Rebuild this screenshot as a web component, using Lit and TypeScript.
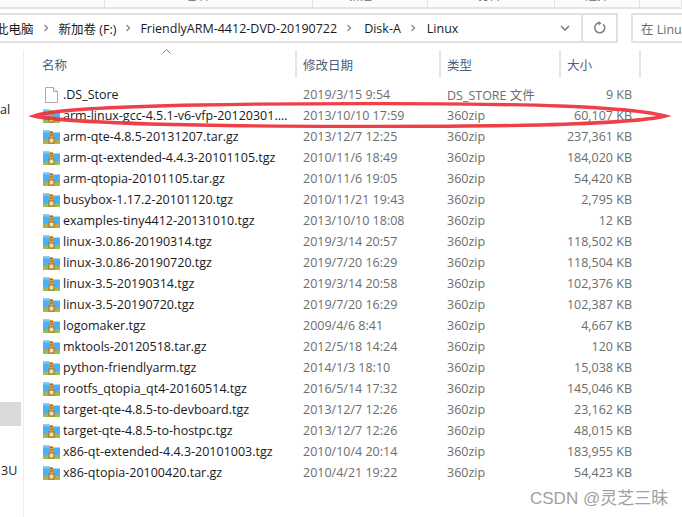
import { LitElement, html, css, svg } from "lit";
import { customElement } from "lit/decorators.js";

const files: [string, string, string, string][] = [
  [".DS_Store", "2019/3/15 9:54", "DS_STORE 文件", "9 KB"],
  ["arm-linux-gcc-4.5.1-v6-vfp-20120301....", "2013/10/10 17:59", "360zip", "60,107 KB"],
  ["arm-qte-4.8.5-20131207.tar.gz", "2013/12/7 12:25", "360zip", "237,361 KB"],
  ["arm-qt-extended-4.4.3-20101105.tgz", "2010/11/6 18:49", "360zip", "184,020 KB"],
  ["arm-qtopia-20101105.tar.gz", "2010/11/6 19:05", "360zip", "54,420 KB"],
  ["busybox-1.17.2-20101120.tgz", "2010/11/21 19:43", "360zip", "2,795 KB"],
  ["examples-tiny4412-20131010.tgz", "2013/10/10 18:08", "360zip", "12 KB"],
  ["linux-3.0.86-20190314.tgz", "2019/3/14 20:57", "360zip", "118,502 KB"],
  ["linux-3.0.86-20190720.tgz", "2019/7/20 16:29", "360zip", "118,504 KB"],
  ["linux-3.5-20190314.tgz", "2019/3/14 20:58", "360zip", "102,376 KB"],
  ["linux-3.5-20190720.tgz", "2019/7/20 16:29", "360zip", "102,387 KB"],
  ["logomaker.tgz", "2009/4/6 8:41", "360zip", "4,667 KB"],
  ["mktools-20120518.tar.gz", "2012/5/18 14:24", "360zip", "120 KB"],
  ["python-friendlyarm.tgz", "2014/1/3 18:10", "360zip", "15,038 KB"],
  ["rootfs_qtopia_qt4-20160514.tgz", "2016/5/14 17:32", "360zip", "145,046 KB"],
  ["target-qte-4.8.5-to-devboard.tgz", "2013/12/7 12:26", "360zip", "23,162 KB"],
  ["target-qte-4.8.5-to-hostpc.tgz", "2013/12/7 12:26", "360zip", "48,015 KB"],
  ["x86-qt-extended-4.4.3-20101003.tgz", "2010/10/4 20:14", "360zip", "183,955 KB"],
  ["x86-qtopia-20100420.tar.gz", "2010/4/21 19:22", "360zip", "54,423 KB"],
];

const zipIcon = svg`<svg class="icon" viewBox="0 0 17 16" width="17" height="16">
  <path d="M0 1.5h6.5l1.5 2H17v10H0z" fill="#4ab2f4"/>
  <path d="M0 1.5h6.5l1.5 2H0z" fill="#7cc8f7"/>
  <rect x="0" y="11.2" width="17" height="1.4" fill="#ef9a22"/>
  <rect x="0" y="12.6" width="17" height="2.4" fill="#8fc44f"/>
  <rect x="7" y="2" width="3" height="8" fill="#e6a23a"/>
  <rect x="7" y="3" width="3" height="1" fill="#9a6a25"/>
  <rect x="7" y="5.5" width="3" height="1" fill="#9a6a25"/>
  <rect x="6" y="9" width="5" height="5" fill="#f6dfa8" stroke="#a86a1c" stroke-width="1"/>
</svg>`;

const fileIcon = svg`<svg class="icon" viewBox="0 0 17 18" width="17" height="18">
  <path d="M2.5 1.5h8l4 4v11h-12z" fill="#fff" stroke="#a9a9a9"/>
  <path d="M10.5 1.5v4h4" fill="#f2f2f2" stroke="#a9a9a9"/>
</svg>`;

const chevron = svg`<svg class="chev" viewBox="0 0 6 8" width="6" height="8"><path d="M1.5 1l3 3-3 3" fill="none" stroke="#8a8a8a" stroke-width="1.4"/></svg>`;

@customElement("app-root")
export class AppRoot extends LitElement {
  static styles = css`
    :host {
      display: block;
      position: relative;
      width: 682px;
      height: 517px;
      overflow: hidden;
      background: #fff;
      font-family: "Open Sans", "Noto Sans CJK SC", sans-serif;
      font-size: 12.5px;
      color: #1a1a1a;
    }
    .ribbon {
      height: 7px;
      border-bottom: 2px solid #e3e3e3;
      background: #fbfbfb;
      display: grid;
      grid-template-columns: 105px 208px 115px 127px 85px 1fr;
      overflow: hidden;
    }
    .ribbon div {
      border-right: 1px solid #e3e3e3;
      display: flex;
      align-items: flex-end;
      color: #666;
      font-size: 12px;
      line-height: 16px;
      overflow: hidden;
    }
    .ribbon span { margin-bottom: 3px; flex: none; }
    .ribbon .r2 { padding-left: 79px; }
    .ribbon .r3 { padding-left: 35px; }
    .ribbon .r4 { padding-left: 50px; }
    .ribbon .r5 { padding-left: 30px; }
    .addr {
      display: flex;
      gap: 13px;
      margin-top: 4px;
      height: 30px;
    }
    .crumbs {
      width: 618px;
      box-sizing: border-box;
      border: 2px solid #e1e1e1;
      border-left: none;
      display: flex;
      align-items: center;
    }
    .crumb-list {
      flex: 1;
      display: flex;
      align-items: center;
      gap: 9px;
      margin-left: -4px;
      white-space: nowrap;
    }
    .crumb-list .t1 { margin-left: 3px; }
    .crumb-list .t2 { margin-left: 1px; }
    .crumb-list .t3 { margin-left: 2px; }
    .drop {
      width: 33px;
      display: flex;
      align-items: center;
      justify-content: center;
    }
    .refresh {
      width: 33px;
      height: 100%;
      border-left: 2px solid #e1e1e1;
      display: flex;
      align-items: center;
      justify-content: center;
    }
    .search {
      flex: 1;
      box-sizing: border-box;
      border: 2px solid #e1e1e1;
      border-right: none;
      padding-left: 8px;
      display: flex;
      align-items: center;
      color: #6d6d6d;
      white-space: nowrap;
      overflow: hidden;
    }
    .main {
      display: grid;
      grid-template-columns: 24px 1fr;
      margin-top: 7px;
      height: 467px;
    }
    .side {
      border-right: 1px solid #eeeeee;
      display: flex;
      flex-direction: column;
      box-sizing: border-box;
      overflow: hidden;
    }
    .side .s1 { margin: 49px 0 0 -20px; height: 21px; line-height: 21px; white-space: nowrap; }
    .side .sel { margin-top: 282px; width: 21px; height: 24px; background: #d9d9d9; flex: none; }
    .side .s2 { margin: 34px 0 0 1px; height: 21px; line-height: 21px; white-space: nowrap; }
    .cols {
      display: grid;
      grid-template-columns: 19px 254px 144px 120px 80px 1fr;
    }
    .head {
      height: 28px;
      position: relative;
      color: #4c607a;
    }
    .head > span {
      border-right: 2px solid #e5e5e5;
      display: flex;
      align-items: center;
      padding-left: 6px;
      box-sizing: border-box;
    }
    .head > span.gap { border: none; padding: 0; }
    .head > span.first { padding-left: 0; margin-left: -1px; position: relative; }
    .sort {
      position: absolute;
      top: -1px;
      left: 120px;
    }
    .list { margin-top: 6px; }
    .row {
      height: 21px;
      align-items: center;
      color: #6d6d6d;
    }
    .name {
      display: flex;
      align-items: center;
      gap: 3px;
      color: #1a1a1a;
      white-space: nowrap;
    }
    .icon { flex: none; }
    .date { padding-left: 6px; white-space: nowrap; }
    .type { padding-left: 6px; white-space: nowrap; }
    .size { text-align: right; padding-right: 9px; white-space: nowrap; grid-column: 5 / 6; margin-left: -60px; }
    .ring {
      position: absolute;
      left: 0;
      top: 0;
      pointer-events: none;
    }
    .mark {
      position: absolute;
      left: 530px;
      top: 489px;
      font-family: "Liberation Sans", "Noto Sans CJK SC", sans-serif;
      font-size: 17px;
      line-height: 20px;
      color: #a0a0a0;
      white-space: nowrap;
    }
  `;

  render() {
    return html`
      <div class="ribbon">
        <div></div>
        <div class="r2"><span>组织</span></div>
        <div class="r3"><span>新建</span></div>
        <div class="r4"><span>打开</span></div>
        <div class="r5"><span>选择</span></div>
        <div></div>
      </div>
      <div class="addr">
        <div class="crumbs">
          <div class="crumb-list">
            <span>此电脑</span>${chevron}
            <span class="t2">新加卷 (F:)</span>${chevron}
            <span>FriendlyARM-4412-DVD-20190722</span>${chevron}
            <span class="t1">Disk-A</span>${chevron}
            <span class="t3">Linux</span>
          </div>
          <div class="drop">
            <svg viewBox="0 0 10 6" width="10" height="6"><path d="M1 1l4 4 4-4" fill="none" stroke="#7a7a7a" stroke-width="1.6"/></svg>
          </div>
          <div class="refresh">
            <svg viewBox="0 0 14 14" width="14" height="14"><path d="M10.2 3.2a5 5 0 1 1-4-1.4" fill="none" stroke="#808080" stroke-width="1.6"/><path d="M5.5 0v4.5l3-2.2z" fill="#808080"/></svg>
          </div>
        </div>
        <div class="search">在 Linux 中搜索</div>
      </div>
      <div class="main">
        <div class="side">
          <div class="s1">Local</div>
          <div class="sel"></div>
          <div class="s2">3U</div>
        </div>
        <div>
          <div class="cols head">
            <span class="gap"></span>
            <span class="first">名称
              <svg class="sort" viewBox="0 0 9 5" width="9" height="5"><path d="M.5 4.5l4-4 4 4" fill="none" stroke="#7a7a7a"/></svg>
            </span>
            <span>修改日期</span>
            <span>类型</span>
            <span>大小</span>
          </div>
          <div class="list">
            ${files.map(
              ([n, d, t, s], i) => html`
                <div class="cols row">
                  <span></span>
                  <span class="name">${i === 0 ? fileIcon : zipIcon}<span>${n}</span></span>
                  <span class="date">${d}</span>
                  <span class="type">${t}</span>
                  <span class="size">${s}</span>
                </div>
              `,
            )}
          </div>
        </div>
      </div>
      <svg class="ring" width="682" height="517" viewBox="0 0 682 517">
        <path d="M34 116 C 45 112, 90 107, 200 105 C 300 103, 480 103, 560 106 C 610 108, 650 112, 665 116 C 650 120, 610 123, 540 125 C 450 127, 250 127, 150 124 C 90 122, 50 120, 34 116 Z"
          fill="none" stroke="#ee2f3a" stroke-width="3.4" opacity="0.92"/>
      </svg>
      <div class="mark">CSDN @灵芝三昧</div>
    `;
  }
}
